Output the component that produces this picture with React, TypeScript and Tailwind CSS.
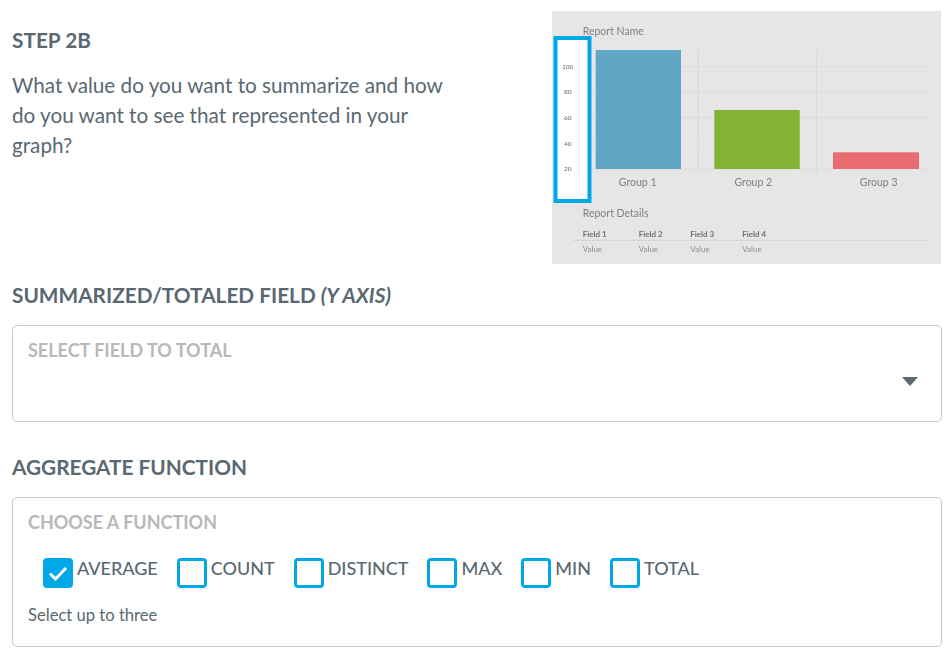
const gridY = [55.7, 81.3, 106.7, 133, 158.3];
const ticks = [
  { label: "100", y: 55.7 },
  { label: "80", y: 81.3 },
  { label: "60", y: 106.7 },
  { label: "40", y: 133 },
  { label: "20", y: 158.3 },
];
const groups = [
  { label: "Group 1", x: 85.7 },
  { label: "Group 2", x: 201.3 },
  { label: "Group 3", x: 326.7 },
];
const fields = [
  { label: "Field 1", x: 30.7 },
  { label: "Field 2", x: 86.7 },
  { label: "Field 3", x: 138.3 },
  { label: "Field 4", x: 190.3 },
];
const functions = ["AVERAGE", "COUNT", "DISTINCT", "MAX", "MIN", "TOTAL"];

function ChartPreview() {
  return (
    <svg
      width="389"
      height="253"
      viewBox="0 0 389 253"
      className="mr-[1px] shrink-0 bg-[#e6e6e6] blur-[0.7px]"
      fontFamily="Lato, sans-serif"
    >
      {gridY.map((y) => (
        <line key={y} x1="27" x2="375" y1={y} y2={y} stroke="#dcdcdc" strokeWidth="1" />
      ))}
      <line x1="146.3" x2="146.3" y1="39" y2="161" stroke="#d8d8d8" />
      <line x1="264.7" x2="264.7" y1="39" y2="161" stroke="#d8d8d8" />
      <rect x="43.7" y="39" width="85.3" height="119" fill="#62a6c5" />
      <rect x="162.3" y="99" width="85.4" height="59" fill="#84b436" />
      <rect x="281" y="141.3" width="86" height="16.7" fill="#e96d70" />
      <text x="30.7" y="24" fontSize="10.5" fill="#808080">Report Name</text>
      {groups.map((g) => (
        <text key={g.label} x={g.x} y="174.5" fontSize="10.5" fill="#808080" textAnchor="middle">
          {g.label}
        </text>
      ))}
      <rect x="3.5" y="27" width="34" height="163" fill="#ffffff" stroke="#00a8e8" strokeWidth="4" />
      <line x1="26.7" x2="26.7" y1="39" y2="163" stroke="#eeeeee" />
      {ticks.map((t) => (
        <text key={t.label} x="15.7" y={t.y + 2} fontSize="6.5" fill="#666666" textAnchor="middle">
          {t.label}
        </text>
      ))}
      <text x="30.7" y="206" fontSize="10.5" fill="#808080">Report Details</text>
      {fields.map((f) => (
        <text key={f.label} x={f.x} y="226" fontSize="8" fontWeight="700" fill="#707070">
          {f.label}
        </text>
      ))}
      <line x1="21.3" x2="374.7" y1="229.3" y2="229.3" stroke="#d2d2d2" />
      {fields.map((f) => (
        <text key={f.label} x={f.x} y="240.5" fontSize="8" fill="#8f8f8f">
          Value
        </text>
      ))}
    </svg>
  );
}

function Checkbox({ label, checked }: { label: string; checked?: boolean }) {
  return (
    <label className="flex items-start gap-[4px]">
      <span
        className={`relative flex h-[30px] w-[30px] items-center justify-center rounded-[4px] border-[3px] border-[#00a8e8] ${
          checked ? "bg-[#00a8e8]" : "bg-white"
        }`}
      >
        {checked ? (
          <svg width="20" height="16" viewBox="0 0 20 16" fill="none">
            <path d="M2 8.5L7.5 14L18 3" stroke="#ffffff" strokeWidth="3" />
          </svg>
        ) : (
          <span className="absolute top-[5px] left-[-1px] h-[2px] w-[1px] bg-[#5a6872]" />
        )}
      </span>
      <span className="text-[18px] leading-[21px] font-medium text-[#5a6872]">{label}</span>
    </label>
  );
}

export default function App() {
  return (
    <div className="h-[660px] w-[951px] overflow-hidden bg-white pt-[11px] pr-[9px] pl-[12px] font-['Lato',sans-serif] text-[#5a6872]">
      <div className="flex justify-between">
        <div className="w-[440px] pt-[18px]">
          <h2 className="text-[20.8px] leading-[22px] font-bold">STEP 2B</h2>
          <p className="mt-[19px] text-[20.7px] leading-[30px]">
            What value do you want to summarize and how do you want to see that represented in your graph?
          </p>
        </div>
        <ChartPreview />
      </div>

      <h3 className="mt-[19px] text-[20.8px] leading-[24px] font-bold">
        SUMMARIZED/TOTALED FIELD <em className="text-[20.8px]">(Y AXIS)</em>
      </h3>
      <div className="relative mt-[18px] h-[97px] rounded-[5px] border border-[#c8c8c8] px-[15px] pt-[13px]">
        <span className="block text-[18px] leading-[22px] font-bold text-[#b8b8b8]">SELECT FIELD TO TOTAL</span>
        <span className="absolute top-[51px] right-[23px] h-0 w-0 border-x-[8px] border-t-[9px] border-x-transparent border-t-[#5a6872]" />
      </div>

      <h3 className="mt-[33px] text-[20.8px] leading-[24px] font-bold">AGGREGATE FUNCTION</h3>
      <div className="mt-[18px] h-[150px] rounded-[5px] border border-[#c8c8c8] px-[15px] pt-[13px]">
        <span className="block text-[18px] leading-[22px] font-bold text-[#b8b8b8]">CHOOSE A FUNCTION</span>
        <div className="mt-[25px] flex gap-[19px] pl-[15px]">
          {functions.map((name, i) => (
            <Checkbox key={name} label={name} checked={i === 0} />
          ))}
        </div>
        <p className="mt-[16px] text-[16.6px] leading-[22px]">Select up to three</p>
      </div>
    </div>
  );
}
